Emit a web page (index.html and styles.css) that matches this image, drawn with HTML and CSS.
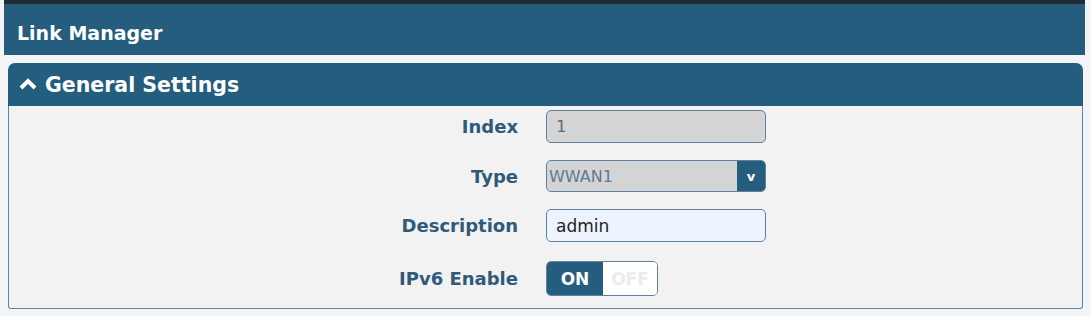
FILE: index.html
```html
<!DOCTYPE html>
<html>
<head>
  <title>Link Manager</title>
  <link rel="stylesheet" href="styles.css">
</head>
<body>

<div class="topbar">Link Manager</div>

<div class="panel">
  <div class="panel-head">
    <svg class="chevron" width="20" height="14" viewBox="0 0 20 14">
      <polyline points="3,11 10,4 17,11" fill="none" stroke="#fff" stroke-width="4" stroke-linejoin="miter"/>
    </svg>
    General Settings
  </div>
  <div class="panel-body">
    <div class="row">
      <label class="lbl">Index</label>
      <div class="field readonly">1</div>
    </div>
    <div class="row">
      <label class="lbl">Type</label>
      <div class="field select">
        <span class="sel-text">WWAN1</span>
        <span class="sel-btn">v</span>
      </div>
    </div>
    <div class="row">
      <label class="lbl">Description</label>
      <div class="field edit">admin</div>
    </div>
    <div class="row row-toggle">
      <label class="lbl">IPv6 Enable</label>
      <div class="toggle">
        <span class="on">ON</span>
        <span class="off">OFF</span>
      </div>
    </div>
  </div>
</div>

</body>
</html>
```

FILE: styles.css
```css
body {
  margin: 0;
  padding: 0 6px 0 4px;
  background-color: #f3f4f6;
  font-family: "DejaVu Sans", Verdana, sans-serif;
}

.topbar {
  box-sizing: border-box;
  height: 55px;
  border-top: 4px solid #1f2c36;
  background-color: #245d7d;
  color: #fff;
  font-weight: bold;
  font-size: 19px;
  padding: 7px 0 0 13px;
  display: flex;
  align-items: center;
}

.panel {
  margin: 8px 2px 0 4px;
}

.panel-head {
  height: 43px;
  background-color: #245d7d;
  border-radius: 7px 7px 0 0;
  color: #fff;
  font-weight: bold;
  font-size: 20.5px;
  display: flex;
  align-items: center;
  padding-left: 10px;
  gap: 7px;
}

.chevron {
  margin-top: -2px;
}

.panel-body {
  background-color: #f2f2f2;
  border: 1px solid #5a86a8;
  border-top: none;
  border-radius: 0 0 3px 3px;
  padding: 4px 0 12px 0;
  display: flex;
  flex-direction: column;
  gap: 17px;
}

.row {
  display: flex;
  align-items: center;
  gap: 28px;
}

.row-toggle {
  margin-top: 2px;
}

.lbl {
  width: 509px;
  text-align: right;
  color: #2f5a78;
  font-weight: bold;
  font-size: 18px;
}

.field {
  box-sizing: border-box;
  width: 220px;
  height: 33px;
  border: 1px solid #5f819d;
  border-radius: 5px;
  font-size: 16.5px;
  display: flex;
  align-items: center;
  padding-left: 9px;
}

.readonly {
  background-color: #d4d4d4;
  color: #5b6c7c;
}

.select {
  height: 32px;
  background-color: #d4d4d4;
  color: #5b7a95;
  padding-left: 2px;
  font-size: 16px;
  overflow: hidden;
}

.sel-text {
  flex: 1;
}

.sel-btn {
  width: 28px;
  align-self: stretch;
  background-color: #245d7d;
  color: #fff;
  font-size: 13px;
  font-weight: bold;
  display: flex;
  align-items: center;
  justify-content: center;
}

.edit {
  background-color: #edf3fc;
  color: #222;
  font-size: 17px;
}

.toggle {
  box-sizing: border-box;
  width: 112px;
  height: 35px;
  border: 1px solid #5f819d;
  border-radius: 5px;
  display: flex;
  overflow: hidden;
  font-size: 17px;
  font-weight: bold;
}

.toggle .on {
  width: 56px;
  background-color: #245d7d;
  color: #fff;
  display: flex;
  align-items: center;
  justify-content: center;
}

.toggle .off {
  flex: 1;
  background-color: #fff;
  color: #ebebeb;
  display: flex;
  align-items: center;
  justify-content: center;
}
```
